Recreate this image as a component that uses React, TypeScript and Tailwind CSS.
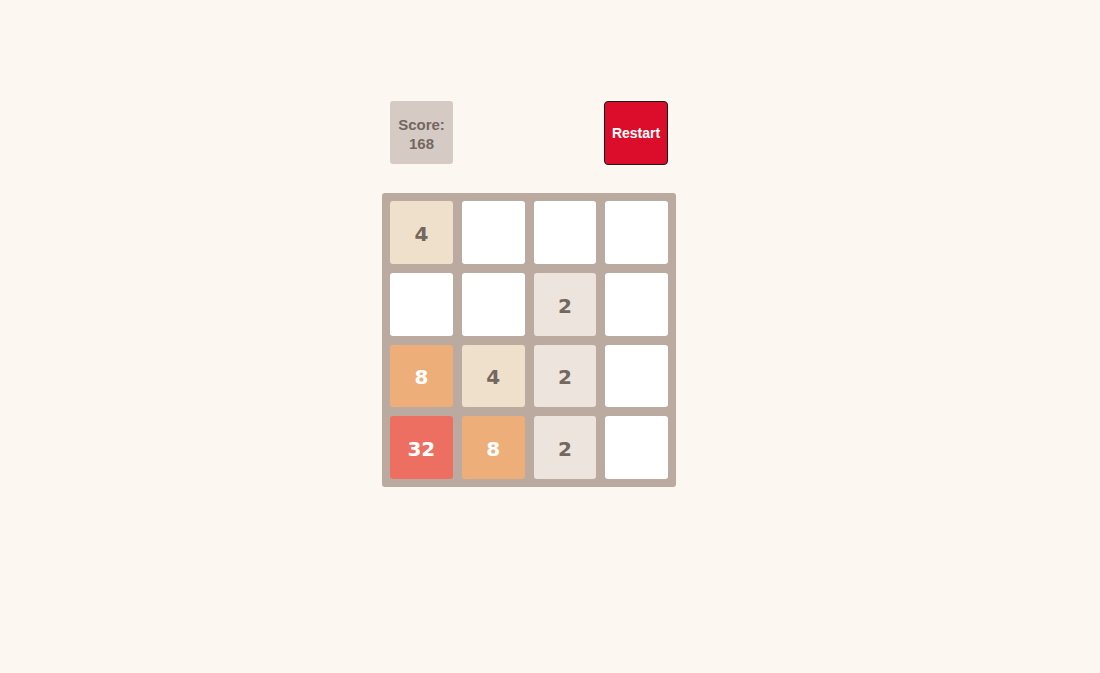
const board: number[][] = [
  [4, 0, 0, 0],
  [0, 0, 2, 0],
  [8, 4, 2, 0],
  [32, 8, 2, 0],
];

const tileStyles: Record<number, string> = {
  0: 'bg-white',
  2: 'bg-[#eee4de] text-[#736760]',
  4: 'bg-[#efe0cc] text-[#736760]',
  8: 'bg-[#eeae7a] text-white',
  32: 'bg-[#ec6f61] text-white',
};

function Tile({ value }: { value: number }) {
  return (
    <div
      className={`flex items-center justify-center rounded-[3px] pt-[3px] font-['DejaVu_Sans',sans-serif] text-[20px] font-bold ${tileStyles[value]}`}
    >
      {value > 0 ? value : ''}
    </div>
  );
}

export default function App() {
  const score = 168;

  return (
    <div className="min-h-[673px] w-full bg-[#fcf7f1] pl-[382px] pt-[101px] font-['Liberation_Sans',Arial,sans-serif]">
      <div className="w-[294px]">
        <div className="flex items-start justify-between px-2">
          <div className="flex h-[63px] w-[63px] flex-col items-center justify-center rounded-[3px] bg-[#d6cac4] pt-[2px] text-[15px] font-bold leading-[19px] text-[#736760]">
            <span>Score:</span>
            <span>{score}</span>
          </div>
          <button
            type="button"
            className="flex h-[64px] w-[64px] items-center justify-center rounded-[4px] border border-[#1a1a1a] bg-[#dc0d2a] text-[14px] font-bold text-white"
          >
            Restart
          </button>
        </div>

        <div className="mt-[28px] grid h-[294px] w-[294px] grid-cols-4 grid-rows-4 gap-[9px] rounded-[3px] bg-[#bbaaa0] p-[8px]">
          {board.flat().map((value, i) => (
            <Tile key={i} value={value} />
          ))}
        </div>
      </div>
    </div>
  );
}
